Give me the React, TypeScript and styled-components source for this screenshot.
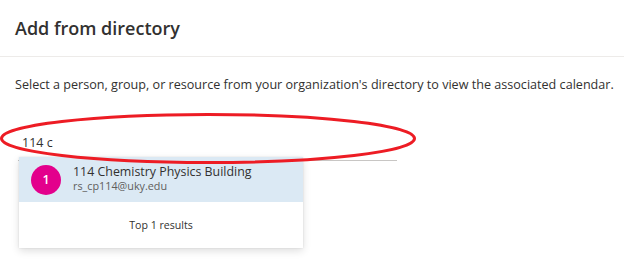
import React from "react";
import styled, { createGlobalStyle } from "styled-components";

const Global = createGlobalStyle`
  html, body { margin: 0; padding: 0; background: #ffffff; }
  body { font-family: "Open Sans", "Noto Sans", sans-serif; color: #323130; }
`;

const Page = styled.div`
  position: relative;
  width: 624px;
  height: 270px;
  overflow: hidden;
  background: #fff;
`;

const Header = styled.div`
  height: 57px;
  box-sizing: border-box;
  padding: 16px 0 0 15px;
  border-bottom: 1px solid #edebe9;
`;

const Title = styled.h1`
  margin: 0;
  font-size: 18px;
  line-height: 24px;
  font-weight: 600;
  color: #323130;
`;

const Body = styled.div`
  padding: 20px 0 0 15px;
`;

const Description = styled.p`
  margin: 0;
  font-size: 12.6px;
  line-height: 16px;
  color: #323130;
  white-space: nowrap;
`;

const Field = styled.div`
  position: relative;
  margin: 38px 0 0 3px;
  width: 379px;
`;

const Input = styled.div`
  height: 30px;
  box-sizing: border-box;
  padding: 4px 0 0 4px;
  font-size: 12.5px;
  line-height: 16px;
  color: #323130;
  border-bottom: 1px solid #c8c6c4;
`;

const Dropdown = styled.div`
  position: absolute;
  top: 26px;
  left: 1px;
  width: 284px;
  background: #fff;
  box-shadow: 0 3px 8px rgba(0, 0, 0, 0.13), 0 0 2px rgba(0, 0, 0, 0.1);
`;

const Suggestion = styled.div`
  display: flex;
  align-items: center;
  gap: 12px;
  height: 45px;
  padding: 0 12px;
  background: #dbe9f4;
`;

const Avatar = styled.div`
  width: 30px;
  height: 30px;
  border-radius: 50%;
  background: #e3008c;
  color: #fff;
  font-size: 12.5px;
  font-weight: 600;
  display: flex;
  align-items: center;
  justify-content: center;
  flex: none;
`;

const Info = styled.div`
  display: flex;
  flex-direction: column;
  margin-top: -2px;
`;

const Name = styled.span`
  font-size: 12.4px;
  line-height: 15px;
  color: #323130;
`;

const Email = styled.span`
  font-size: 10.8px;
  line-height: 14px;
  color: #605e5c;
`;

const Footer = styled.div`
  height: 46px;
  display: flex;
  align-items: center;
  justify-content: center;
  font-size: 10.6px;
  color: #323130;
`;

const Ellipse = styled.svg`
  position: absolute;
  left: 0;
  top: 0;
  pointer-events: none;
`;

export default function App() {
  return (
    <Page>
      <Global />
      <Header>
        <Title>Add from directory</Title>
      </Header>
      <Body>
        <Description>
          Select a person, group, or resource from your organization's directory to view the associated calendar.
        </Description>
        <Field>
          <Input>114 c</Input>
          <Dropdown>
            <Suggestion>
              <Avatar>1</Avatar>
              <Info>
                <Name>114 Chemistry Physics Building</Name>
                <Email>rs_cp114@uky.edu</Email>
              </Info>
            </Suggestion>
            <Footer>Top 1 results</Footer>
          </Dropdown>
        </Field>
      </Body>
      <Ellipse width="624" height="270" viewBox="0 0 624 270">
        <ellipse cx="208" cy="138.5" rx="206.5" ry="24" fill="none" stroke="#ed1c24" strokeWidth="3" />
      </Ellipse>
    </Page>
  );
}
